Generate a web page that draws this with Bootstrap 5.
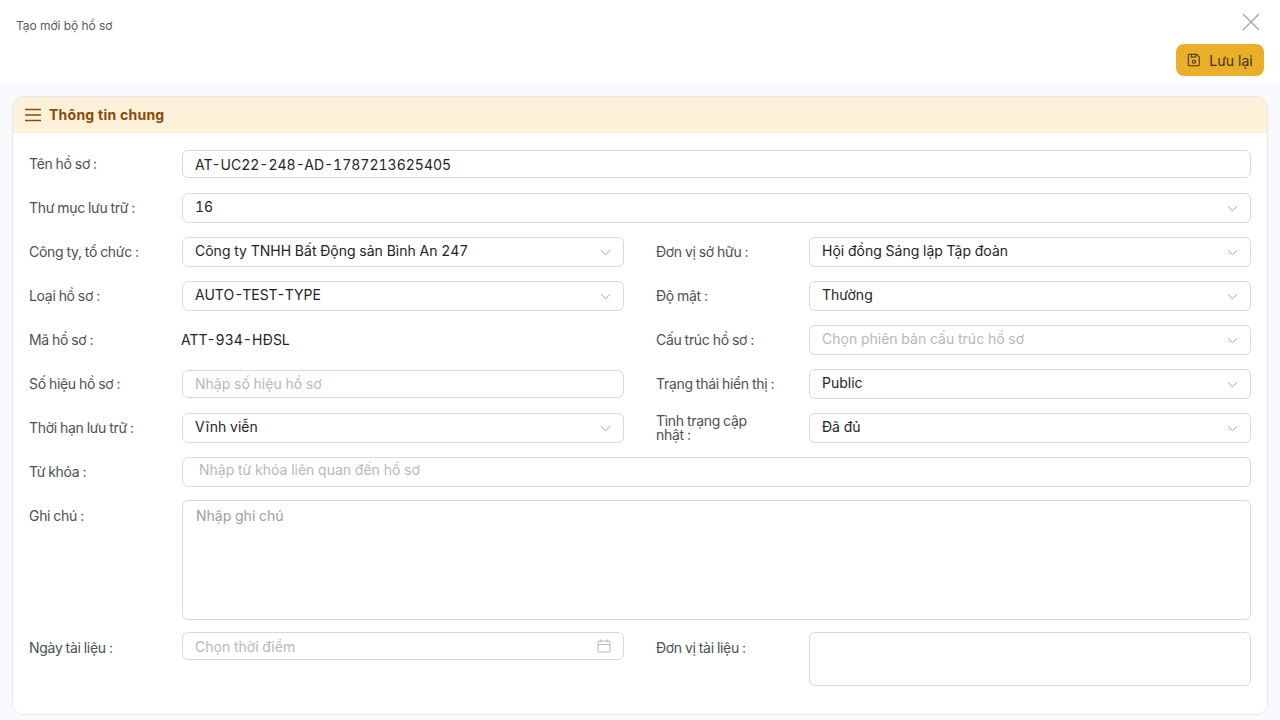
<!DOCTYPE html>
<html lang="vi">
  <head>
    <meta charset="UTF-8" />
    <meta name="viewport" content="width=device-width, initial-scale=1" />
    <title>Tạo mới bộ hồ sơ</title>
    <link href="https://cdn.jsdelivr.net/npm/bootstrap@5.3.0/dist/css/bootstrap.min.css" rel="stylesheet" />
    <style>
      html, body { height: 720px; overflow: hidden; }
      body { background: #f8f9fc; font-family: Inter, "Liberation Sans", sans-serif; font-size: 14px; color: #1f2328; }
      .top-bar { height: 84px; background: #fff; padding: 18px 16px 8px 16px; }
      .top-title { font-size: 12px; color: #555b63; line-height: 15px; letter-spacing: -0.05px; }
      .close-x { width: 18px; height: 18px; margin: -5px 0 0 0; color: #9a9ea3; }
      .save-btn { background: #ebae29; color: #3a3320; width: 88px; height: 32px; border: 0; border-radius: 8px; font-size: 14px; margin: 13px 0 0 0; padding: 0; }
      .save-btn:hover { background: #ebae29; color: #3a3320; }
      .info-card { margin: 12px 12px 0 12px; height: 619px; background: #fff; border: 1px solid #e6e8ec; border-radius: 12px; overflow: hidden; }
      .info-head { height: 36px; background: #fdf1da; color: #8a4b08; font-weight: 700; font-size: 14px; letter-spacing: 0.25px; padding-left: 12px; border-bottom: 1px solid #f3eee3; }
      .info-body { padding: 17px 16px 0 16px; }
      .f-row { --bs-gutter-x: 32px; --bs-gutter-y: 0; margin-bottom: 14px; }
      .f-label { flex: 0 0 153px; width: 153px; padding-top: 8px; padding-right: 30px; line-height: 14px; color: #4a5058; font-size: 14px; letter-spacing: -0.3px; word-spacing: -0.5px; }
      .f-label.lbl-first { padding-top: 7px; }
      .f-label.lbl-low { padding-top: 9px; }
      .f-label.lbl-two { padding-top: 1px; padding-right: 40px; }
      .f-ctl { flex: 1 1 0; min-width: 0; }
      .f-ctl .form-control, .f-ctl .form-select { height: 30px; font-size: 14px; color: #1f2328; border: 1px solid #d9d9d9; border-radius: 6px; padding: 0 32px 3px 12px; font-variant-numeric: tabular-nums; box-shadow: none; }
      .f-ctl .form-select { background-image: url("data:image/svg+xml,%3csvg xmlns='http://www.w3.org/2000/svg' viewBox='0 0 12 12'%3e%3cpath fill='none' stroke='%23999' d='M1 3.5l5 5 5-5'/%3e%3c/svg%3e"); background-size: 11px 11px; background-position: right 12px center; }
      .f-ctl .ctl-short { height: 28px; padding-bottom: 0; }
      .f-ctl .ctl-shift { margin-top: 1px; padding-bottom: 2px; }
      .f-ctl .is-empty { color: #b5b8bd; }
      .f-ctl .form-control::placeholder { color: #b5b8bd; opacity: 1; }
      .f-ctl .kw-input { padding-left: 16px; padding-bottom: 5px; }
      .f-ctl .note-area { height: 120px; resize: none; padding: 4px 13px; }
      .f-ctl .note-area::placeholder { color: #9a9da3; }
      .f-ctl .unit-area { height: 54px; resize: none; }
      .plain-val { padding-top: 6px; line-height: 18px; font-variant-numeric: tabular-nums; margin-left: -1px; }
      .date-ico { position: absolute; right: 12px; top: 6px; width: 16px; height: 16px; color: #b5b8bd; }
    </style>
  </head>
  <body>
    <!-- Header -->
    <div class="top-bar d-flex justify-content-between">
      <div class="top-title">Tạo mới bộ hồ sơ</div>
      <div class="d-flex flex-column align-items-end">
        <svg class="close-x me-1" viewBox="0 0 18 18" fill="none" stroke="currentColor" stroke-width="1.1"><path d="M1 1l16 16M17 1L1 17" /></svg>
        <button type="button" class="btn save-btn d-flex align-items-center justify-content-center gap-2">
          <svg width="14" height="14" viewBox="0 0 16 16" fill="none" stroke="currentColor" stroke-width="1.2"><path d="M2.5 1.5h8.5l3 3v8.5a1.5 1.5 0 0 1-1.5 1.5h-9A1.5 1.5 0 0 1 1.5 13V2.5a1 1 0 0 1 1-1z" /><path d="M5 1.5v3h5v-3" /><circle cx="8" cy="10" r="1.8" /></svg>
          <span>Lưu lại</span>
        </button>
      </div>
    </div>

    <!-- Thông tin chung -->
    <div class="info-card">
      <div class="info-head d-flex align-items-center gap-2">
        <svg width="16" height="14" viewBox="0 0 16 14" stroke="currentColor" stroke-width="1.5"><path d="M0 1.5h16M0 7h16M0 12.5h16" /></svg>
        <span>Thông tin chung</span>
      </div>
      <div class="info-body">
        <div class="d-flex f-row" style="margin-bottom: 15px">
          <div class="f-label lbl-first">Tên hồ sơ :</div>
          <div class="f-ctl"><input class="form-control ctl-short" value="AT-UC22-248-AD-1787213625405" /></div>
        </div>
        <div class="d-flex f-row">
          <div class="f-label">Thư mục lưu trữ :</div>
          <div class="f-ctl"><select class="form-select"><option>16</option></select></div>
        </div>
        <div class="row f-row">
          <div class="col-6 d-flex">
            <div class="f-label">Công ty, tổ chức :</div>
            <div class="f-ctl"><select class="form-select"><option>Công ty TNHH Bất Động sản Bình An 247</option></select></div>
          </div>
          <div class="col-6 d-flex">
            <div class="f-label">Đơn vị sở hữu :</div>
            <div class="f-ctl"><select class="form-select"><option>Hội đồng Sáng lập Tập đoàn</option></select></div>
          </div>
        </div>
        <div class="row f-row">
          <div class="col-6 d-flex">
            <div class="f-label">Loại hồ sơ :</div>
            <div class="f-ctl"><select class="form-select"><option>AUTO-TEST-TYPE</option></select></div>
          </div>
          <div class="col-6 d-flex">
            <div class="f-label">Độ mật :</div>
            <div class="f-ctl"><select class="form-select"><option>Thường</option></select></div>
          </div>
        </div>
        <div class="row f-row">
          <div class="col-6 d-flex">
            <div class="f-label">Mã hồ sơ :</div>
            <div class="f-ctl plain-val">ATT-934-HĐSL</div>
          </div>
          <div class="col-6 d-flex">
            <div class="f-label">Cấu trúc hồ sơ :</div>
            <div class="f-ctl"><select class="form-select is-empty"><option>Chọn phiên bản cấu trúc hồ sơ</option></select></div>
          </div>
        </div>
        <div class="row f-row">
          <div class="col-6 d-flex">
            <div class="f-label">Số hiệu hồ sơ :</div>
            <div class="f-ctl"><input class="form-control ctl-short ctl-shift" placeholder="Nhập số hiệu hồ sơ" /></div>
          </div>
          <div class="col-6 d-flex">
            <div class="f-label">Trạng thái hiển thị :</div>
            <div class="f-ctl"><select class="form-select"><option>Public</option></select></div>
          </div>
        </div>
        <div class="row f-row">
          <div class="col-6 d-flex">
            <div class="f-label">Thời hạn lưu trữ :</div>
            <div class="f-ctl"><select class="form-select"><option>Vĩnh viễn</option></select></div>
          </div>
          <div class="col-6 d-flex">
            <div class="f-label lbl-two">Tình trạng cập nhật :</div>
            <div class="f-ctl"><select class="form-select"><option>Đã đủ</option></select></div>
          </div>
        </div>
        <div class="d-flex f-row" style="margin-bottom: 13px">
          <div class="f-label">Từ khóa :</div>
          <div class="f-ctl"><input class="form-control kw-input" placeholder="Nhập từ khóa liên quan đến hồ sơ" /></div>
        </div>
        <div class="d-flex f-row" style="margin-bottom: 12px">
          <div class="f-label lbl-low">Ghi chú :</div>
          <div class="f-ctl"><textarea class="form-control note-area" placeholder="Nhập ghi chú"></textarea></div>
        </div>
        <div class="row f-row">
          <div class="col-6 d-flex">
            <div class="f-label lbl-low">Ngày tài liệu :</div>
            <div class="f-ctl position-relative">
              <input class="form-control ctl-short" placeholder="Chọn thời điểm" />
              <svg class="date-ico" viewBox="0 0 16 16" fill="none" stroke="currentColor" stroke-width="1"><rect x="2" y="3" width="12" height="11" rx="1" /><path d="M2 6.5h12M5 1.5v3M11 1.5v3" /></svg>
            </div>
          </div>
          <div class="col-6 d-flex">
            <div class="f-label lbl-low">Đơn vị tài liệu :</div>
            <div class="f-ctl"><textarea class="form-control unit-area"></textarea></div>
          </div>
        </div>
      </div>
    </div>
  </body>
</html>
